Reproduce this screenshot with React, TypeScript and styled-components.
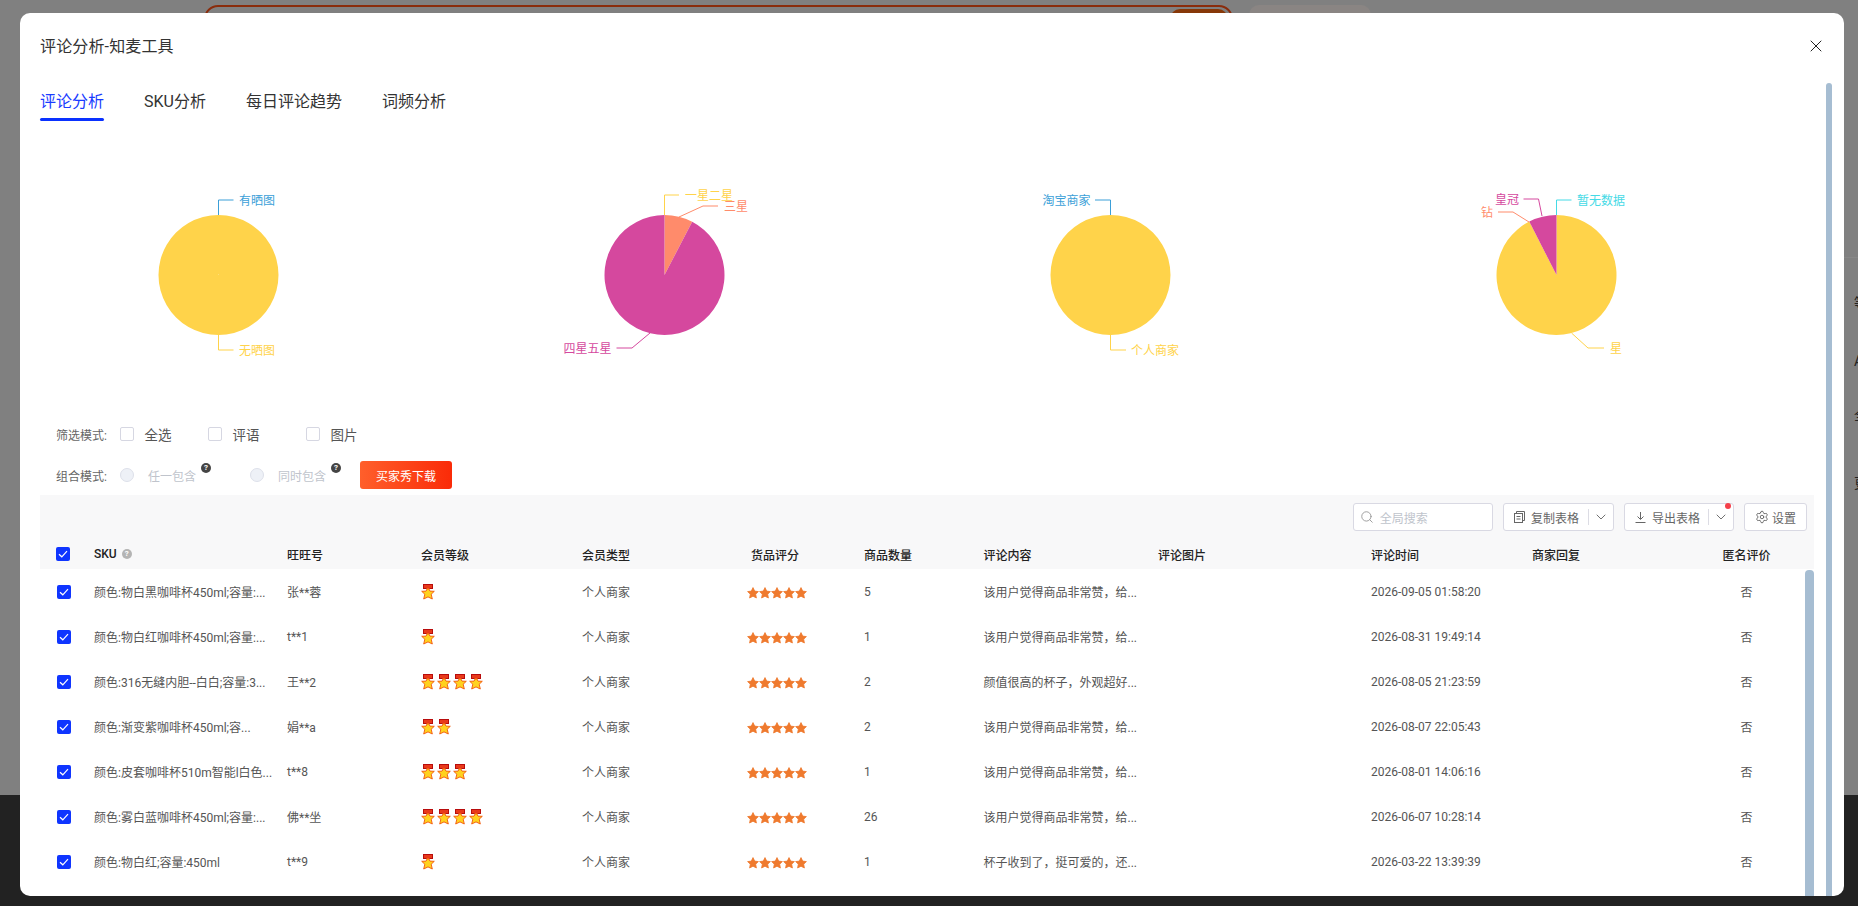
import React from "react";
import styled, { createGlobalStyle } from "styled-components";
import { ChevronDown, Search, Settings, X } from "lucide-react";

const Global = createGlobalStyle`
  html, body { margin: 0; padding: 0; height: 100%; overflow: hidden; }
  body { font-family: Roboto, "Noto Sans CJK SC", sans-serif; color: #333; }
`;

const Page = styled.div`
  position: relative;
  width: 1858px;
  height: 906px;
  background: #808080;
  display: flex;
  flex-direction: column;
  overflow: hidden;
`;
const BackTop = styled.div`
  display: flex;
  gap: 16px;
  height: 257px;
  padding: 5px 0 0 204px;
  box-sizing: border-box;
  flex: none;
`;
const BackSearch = styled.div`
  width: 1029px;
  height: 60px;
  box-sizing: border-box;
  border: 2px solid #8a2c0c;
  border-radius: 14px;
  display: flex;
  justify-content: flex-end;
  padding: 2px 3px;
`;
const BackSearchBtn = styled.div`
  width: 58px;
  height: 50px;
  background: #873808;
  border-radius: 10px;
`;
const BackPill = styled.div`
  width: 122px;
  height: 60px;
  background: #8a8583;
  border-radius: 10px;
`;
const BackPanel = styled.div`
  flex: 1;
  font-size: 14px;
  color: #222;
`;
const BackRule = styled.div`
  height: 1px;
  margin-left: 1844px;
  background: #878787;
`;
const BackLine = styled.div<{ $gap: number }>`
  margin-top: ${(p) => p.$gap}px;
  padding-left: 1854px;
  line-height: 20px;
  white-space: nowrap;
`;
const BackFooter = styled.div`
  height: 111px;
  flex: none;
  background: #222;
`;

const Modal = styled.div`
  position: absolute;
  left: 20px;
  top: 13px;
  width: 1824px;
  height: 883px;
  background: #fff;
  border-radius: 10px;
  overflow: hidden;
`;
const ModalHeader = styled.div`
  height: 66px;
  box-sizing: border-box;
  padding: 0 18px 2px 20px;
  display: flex;
  align-items: center;
  justify-content: space-between;
  font-size: 16px;
  letter-spacing: 0.15px;
  color: #333;
`;
const CloseBtn = styled.div`
  display: flex;
  margin-top: 2px;
  color: #222;
`;
const Tabs = styled.div`
  display: flex;
  gap: 40px;
  padding-left: 20px;
  height: 42px;
`;
const Tab = styled.div<{ $active?: boolean }>`
  position: relative;
  padding-top: 11px;
  font-size: 16px;
  line-height: 24px;
  color: ${(p) => (p.$active ? "#1a3cff" : "#333")};
  &::after {
    content: "";
    display: ${(p) => (p.$active ? "block" : "none")};
    position: absolute;
    left: 0;
    right: 0;
    bottom: 0;
    height: 3px;
    border-radius: 2px;
    background: #0a31ff;
  }
`;
const Charts = styled.div`
  display: grid;
  grid-template-columns: repeat(4, 446px);
  padding: 34px 0 0 20px;
  height: 240px;
`;
const ChartSvg = styled.svg`
  display: block;
  width: 446px;
  height: 240px;
  font-size: 12px;
`;
const Filters = styled.div`
  display: flex;
  flex-direction: column;
  gap: 13px;
  padding: 25px 0 6px 36px;
`;
const FilterRow = styled.div`
  height: 28px;
  display: flex;
  align-items: center;
`;
const FilterLabel = styled.div`
  width: 64px;
  font-size: 12px;
  color: #666;
`;
const CheckOption = styled.label<{ $width: number }>`
  width: ${(p) => p.$width}px;
  display: flex;
  align-items: center;
  gap: 10.5px;
  font-size: 13.5px;
  color: #555;
`;
const EmptyBox = styled.span`
  width: 14px;
  height: 14px;
  box-sizing: border-box;
  border: 1px solid #d6d7e2;
  border-radius: 2px;
  background: #fff;
`;
const RadioOption = styled.div<{ $width: number }>`
  width: ${(p) => p.$width}px;
  display: flex;
  align-items: center;
  font-size: 12px;
  color: #c0c4cc;
`;
const RadioDot = styled.span`
  width: 14px;
  height: 14px;
  box-sizing: border-box;
  border: 1px solid #dde0ea;
  border-radius: 50%;
  background: #eef1f7;
  margin-right: 14px;
`;
const HelpMark = styled.span<{ $dark?: boolean }>`
  width: 10px;
  height: 10px;
  border-radius: 50%;
  margin-left: 5px;
  margin-top: ${(p) => (p.$dark ? -14 : 0)}px;
  background: ${(p) => (p.$dark ? "#444" : "#b4b4b4")};
  color: #fff;
  font-size: 8px;
  font-weight: 700;
  line-height: 10px;
  text-align: center;
  flex: none;
`;
const DownloadBtn = styled.button`
  width: 92px;
  height: 28px;
  margin-left: -4px;
  border: 0;
  border-radius: 3px;
  background: linear-gradient(90deg, #ff5f2b, #fa2b08);
  color: #fff;
  font: inherit;
  font-size: 12px;
  padding: 0;
`;
const Table = styled.div`
  margin: 0 10px 0 20px;
  width: 1774px;
`;
const TableHead = styled.div`
  background: #f8f8f9;
  height: 74px;
  display: flex;
  flex-direction: column;
`;
const Toolbar = styled.div`
  height: 44px;
  padding: 8px 7px 0 0;
  box-sizing: border-box;
  display: flex;
  justify-content: flex-end;
  gap: 10px;
`;
const ToolBox = styled.div<{ $width: number }>`
  width: ${(p) => p.$width}px;
  height: 28px;
  box-sizing: border-box;
  border: 1px solid #d9d9e3;
  border-radius: 3px;
  background: #fff;
  display: flex;
  align-items: center;
  position: relative;
  font-size: 12px;
  color: #666;
`;
const ToolIcon = styled.span<{ $left?: number; $right?: number }>`
  display: flex;
  color: #666;
  margin: 0 ${(p) => p.$right ?? 6}px 0 ${(p) => p.$left ?? 10}px;
`;
const Placeholder = styled.span`
  color: #c0c4cc;
`;
const ToolCaret = styled.span`
  margin-left: auto;
  width: 24px;
  height: 16px;
  border-left: 1px solid #dcdce4;
  display: flex;
  align-items: center;
  justify-content: center;
  color: #666;
`;
const RedDot = styled.span`
  position: absolute;
  top: -1px;
  right: 2px;
  width: 6px;
  height: 6px;
  border-radius: 50%;
  background: #f5404a;
`;
const cols = "54px 193px 134px 161px 165px 117px 119.5px 174.5px 213px 161px 168px 93px 21px";
const HeadRow = styled.div`
  display: grid;
  grid-template-columns: ${cols};
  align-items: center;
  height: 30px;
  font-size: 12px;
  font-weight: 500;
  color: #222;
`;
const HeadCell = styled.div<{ $center?: boolean; $inset?: number }>`
  display: flex;
  align-items: center;
  justify-content: ${(p) => (p.$center ? "center" : "flex-start")};
  padding-left: ${(p) => p.$inset ?? 0}px;
`;
const Row = styled.div`
  display: grid;
  grid-template-columns: ${cols};
  align-items: center;
  height: 45px;
  font-size: 12px;
  color: #555;
  white-space: nowrap;
`;
const Cell = styled.div<{ $center?: boolean }>`
  display: flex;
  align-items: center;
  justify-content: ${(p) => (p.$center ? "center" : "flex-start")};
`;
const CheckBox = styled.span<{ $offset: number }>`
  width: 14px;
  height: 14px;
  margin-left: ${(p) => p.$offset}px;
  border-radius: 2px;
  background: #0f35ff;
  display: flex;
  align-items: center;
  justify-content: center;
`;
const Medals = styled.div`
  display: flex;
  gap: 2px;
`;
const StarRow = styled.div`
  display: flex;
  margin-top: 2px;
`;
const ModalScroll = styled.div`
  position: absolute;
  right: 12px;
  top: 70px;
  bottom: 0;
  width: 6px;
  border-radius: 3px 3px 0 0;
  background: #a6bdd2;
`;
const TableScroll = styled.div`
  position: absolute;
  left: 1785px;
  top: 557px;
  bottom: 0;
  width: 9px;
  border-radius: 4px 4px 0 0;
  background: #a6bdd2;
`;

const polar = (cx: number, cy: number, r: number, deg: number) => {
  const a = (deg * Math.PI) / 180;
  return [cx + r * Math.sin(a), cy - r * Math.cos(a)];
};
const slicePath = (cx: number, cy: number, r: number, from: number, to: number) => {
  const [x1, y1] = polar(cx, cy, r, from);
  const [x2, y2] = polar(cx, cy, r, to);
  return `M${cx} ${cy}L${x1} ${y1}A${r} ${r} 0 ${to - from > 180 ? 1 : 0} 1 ${x2} ${y2}Z`;
};

const YELLOW = "#ffd34a";
const BLUE = "#3b9fd8";
const PINK = "#d5489e";
const SALMON = "#ff8b6b";
const CYAN = "#45dae6";

type Label = { text: string; x: number; y: number; color: string; line: string };
type Chart = { start: number; cx: number; slices: { from: number; to: number; color: string }[]; labels: Label[] };

const charts: Chart[] = [
  {
    start: 40,
    cx: 218.5,
    slices: [{ from: 0, to: 359.99, color: YELLOW }],
    labels: [
      { text: "有晒图", x: 239, y: 200, color: BLUE, line: "218.5,215 218.5,200 233.5,200" },
      { text: "无晒图", x: 239, y: 350, color: YELLOW, line: "218.5,335 218.5,350 233.5,350" },
    ],
  },
  {
    start: 486,
    cx: 664.5,
    slices: [
      { from: 0, to: 27.5, color: SALMON },
      { from: 27.5, to: 360, color: PINK },
    ],
    labels: [
      { text: "一星二星", x: 685, y: 195, color: YELLOW, line: "664.5,215 664.5,195 679,195" },
      { text: "三星", x: 724, y: 206, color: SALMON, line: "679,217 703,206 718,206" },
      { text: "四星五星", x: 563.5, y: 348, color: PINK, line: "650,333 632,348 616.5,348" },
    ],
  },
  {
    start: 932,
    cx: 1110.5,
    slices: [{ from: 0, to: 359.99, color: YELLOW }],
    labels: [
      { text: "淘宝商家", x: 1042.5, y: 200, color: BLUE, line: "1110.5,215 1110.5,200 1095,200" },
      { text: "个人商家", x: 1131, y: 350, color: YELLOW, line: "1110.5,335 1110.5,350 1126,350" },
    ],
  },
  {
    start: 1378,
    cx: 1556.5,
    slices: [
      { from: 0, to: 333, color: YELLOW },
      { from: 333, to: 360, color: PINK },
    ],
    labels: [
      { text: "暂无数据", x: 1577, y: 200, color: CYAN, line: "1556.5,215 1556.5,200 1571.5,200" },
      { text: "皇冠", x: 1495, y: 199, color: PINK, line: "1542,216 1538.5,199 1523.5,199" },
      { text: "钻", x: 1481, y: 212, color: SALMON, line: "1529,222 1513,212 1498,212" },
      { text: "星", x: 1610, y: 348, color: YELLOW, line: "1571.5,333 1588,348 1604,348" },
    ],
  },
];

const PieChart = ({ chart }: { chart: Chart }) => (
  <ChartSvg viewBox={`${chart.start} 155 446 240`}>
    {chart.slices.map((s) => (
      <path key={s.from} d={slicePath(chart.cx, 275, 60, s.from, s.to)} fill={s.color} />
    ))}
    {chart.labels.map((l) => (
      <g key={l.text}>
        <polyline points={l.line} fill="none" stroke={l.color} strokeWidth="1" />
        <text x={l.x} y={l.y} dy="4.8" fill={l.color}>
          {l.text}
        </text>
      </g>
    ))}
  </ChartSvg>
);

const Medal = () => (
  <svg width="14" height="16" viewBox="0 0 14 16">
    <rect x="2.5" y="0.5" width="9" height="4" fill="#e8391b" stroke="#b80c0c" />
    <rect x="5.5" y="4" width="3" height="2" fill="#f0641e" />
    <polygon
      points="7,4 9,7.1 13.3,7.3 10.2,10.2 11.3,15 7,12.9 2.7,15 3.8,10.2 .7,7.3 5,7.1"
      fill="#ffd21f"
      stroke="#f2560c"
      strokeWidth="0.9"
    />
  </svg>
);

const Star = () => (
  <svg width="12" height="12" viewBox="0 0 12 12">
    <polygon
      points="6,0.6 7.7,4.1 11.4,4.6 8.7,7.2 9.4,11 6,9.2 2.6,11 3.3,7.2 .6,4.6 4.3,4.1"
      fill="#ef7a2e"
      stroke="#ef7a2e"
      strokeWidth="0.8"
    />
  </svg>
);

const Tick = () => (
  <svg width="10" height="8" viewBox="0 0 10 8">
    <path d="M1 4.2 3.8 6.8 9 1.2" fill="none" stroke="#fff" strokeWidth="1.2" />
  </svg>
);

const CopyIcon = () => (
  <svg width="11" height="12" viewBox="0 0 11 12" fill="none" stroke="currentColor" strokeWidth="1">
    <path d="M2.5 2.5V.5h8v9h-2" />
    <rect x=".5" y="2.5" width="8" height="9" />
    <path d="M2.5 5.5h4M2.5 8h4" />
  </svg>
);
const ExportIcon = () => (
  <svg width="11" height="11" viewBox="0 0 11 11" fill="none" stroke="currentColor" strokeWidth="1">
    <path d="M5.5 0v7M2.5 4.5l3 3 3-3M.5 10.5h10" />
  </svg>
);

const rows = [
  ["颜色:物白黑咖啡杯450ml;容量:...", "张**蓉", 1, "5", "该用户觉得商品非常赞，给...", "2026-09-05 01:58:20"],
  ["颜色:物白红咖啡杯450ml;容量:...", "t**1", 1, "1", "该用户觉得商品非常赞，给...", "2026-08-31 19:49:14"],
  ["颜色:316无缝内胆--白白;容量:3...", "王**2", 4, "2", "颜值很高的杯子，外观超好...", "2026-08-05 21:23:59"],
  ["颜色:渐变紫咖啡杯450ml;容...", "娟**a", 2, "2", "该用户觉得商品非常赞，给...", "2026-08-07 22:05:43"],
  ["颜色:皮套咖啡杯510m智能l白色...", "t**8", 3, "1", "该用户觉得商品非常赞，给...", "2026-08-01 14:06:16"],
  ["颜色:雾白蓝咖啡杯450ml;容量:...", "佛**坐", 4, "26", "该用户觉得商品非常赞，给...", "2026-06-07 10:28:14"],
  ["颜色:物白红;容量:450ml", "t**9", 1, "1", "杯子收到了，挺可爱的，还...", "2026-03-22 13:39:39"],
] as const;

export default function App() {
  return (
    <Page>
      <Global />
      <BackTop>
        <BackSearch>
          <BackSearchBtn />
        </BackSearch>
        <BackPill />
      </BackTop>
      <BackPanel>
        <BackRule />
        <BackLine $gap={35}>等</BackLine>
        <BackLine $gap={38}>A</BackLine>
        <BackLine $gap={34}>全</BackLine>
        <BackLine $gap={48}>更</BackLine>
      </BackPanel>
      <BackFooter />
      <Modal>
        <ModalHeader>
          评论分析-知麦工具
          <CloseBtn>
            <X size={20} strokeWidth={1.2} />
          </CloseBtn>
        </ModalHeader>
        <Tabs>
          <Tab $active>评论分析</Tab>
          <Tab>SKU分析</Tab>
          <Tab>每日评论趋势</Tab>
          <Tab>词频分析</Tab>
        </Tabs>
        <Charts>
          {charts.map((c) => (
            <PieChart key={c.start} chart={c} />
          ))}
        </Charts>
        <Filters>
          <FilterRow>
            <FilterLabel>筛选模式:</FilterLabel>
            <CheckOption $width={88}>
              <EmptyBox />
              全选
            </CheckOption>
            <CheckOption $width={98}>
              <EmptyBox />
              评语
            </CheckOption>
            <CheckOption $width={60}>
              <EmptyBox />
              图片
            </CheckOption>
          </FilterRow>
          <FilterRow>
            <FilterLabel>组合模式:</FilterLabel>
            <RadioOption $width={130}>
              <RadioDot />
              任一包含
              <HelpMark $dark>?</HelpMark>
            </RadioOption>
            <RadioOption $width={114}>
              <RadioDot />
              同时包含
              <HelpMark $dark>?</HelpMark>
            </RadioOption>
            <DownloadBtn>买家秀下载</DownloadBtn>
          </FilterRow>
        </Filters>
        <Table>
          <TableHead>
            <Toolbar>
              <ToolBox $width={140}>
                <ToolIcon $left={5.75}>
                  <Search size={14} strokeWidth={1.6} color="#9a9a9a" />
                </ToolIcon>
                <Placeholder>全局搜索</Placeholder>
              </ToolBox>
              <ToolBox $width={111}>
                <ToolIcon>
                  <CopyIcon />
                </ToolIcon>
                复制表格
                <ToolCaret>
                  <ChevronDown size={16} strokeWidth={1.4} />
                </ToolCaret>
              </ToolBox>
              <ToolBox $width={110}>
                <ToolIcon>
                  <ExportIcon />
                </ToolIcon>
                导出表格
                <ToolCaret>
                  <ChevronDown size={16} strokeWidth={1.4} />
                </ToolCaret>
                <RedDot />
              </ToolBox>
              <ToolBox $width={63}>
                <ToolIcon $left={9.8} $right={3.2}>
                  <Settings size={14} strokeWidth={1.6} />
                </ToolIcon>
                设置
              </ToolBox>
            </Toolbar>
            <HeadRow>
              <HeadCell>
                <CheckBox $offset={16}>
                  <Tick />
                </CheckBox>
              </HeadCell>
              <HeadCell>
                SKU
                <HelpMark>?</HelpMark>
              </HeadCell>
              <HeadCell>旺旺号</HeadCell>
              <HeadCell>会员等级</HeadCell>
              <HeadCell>会员类型</HeadCell>
              <HeadCell $inset={4}>货品评分</HeadCell>
              <HeadCell>商品数量</HeadCell>
              <HeadCell>评论内容</HeadCell>
              <HeadCell>评论图片</HeadCell>
              <HeadCell>评论时间</HeadCell>
              <HeadCell>商家回复</HeadCell>
              <HeadCell $center>匿名评价</HeadCell>
              <HeadCell />
            </HeadRow>
          </TableHead>
          {rows.map((r) => (
            <Row key={r[5]}>
              <Cell>
                <CheckBox $offset={17}>
                  <Tick />
                </CheckBox>
              </Cell>
              <Cell>{r[0]}</Cell>
              <Cell>{r[1]}</Cell>
              <Cell>
                <Medals>
                  {Array.from({ length: r[2] }, (_, i) => (
                    <Medal key={i} />
                  ))}
                </Medals>
              </Cell>
              <Cell>个人商家</Cell>
              <Cell>
                <StarRow>
                  {[0, 1, 2, 3, 4].map((i) => (
                    <Star key={i} />
                  ))}
                </StarRow>
              </Cell>
              <Cell>{r[3]}</Cell>
              <Cell>{r[4]}</Cell>
              <Cell />
              <Cell>{r[5]}</Cell>
              <Cell />
              <Cell $center>否</Cell>
              <Cell />
            </Row>
          ))}
        </Table>
        <TableScroll />
        <ModalScroll />
      </Modal>
    </Page>
  );
}
